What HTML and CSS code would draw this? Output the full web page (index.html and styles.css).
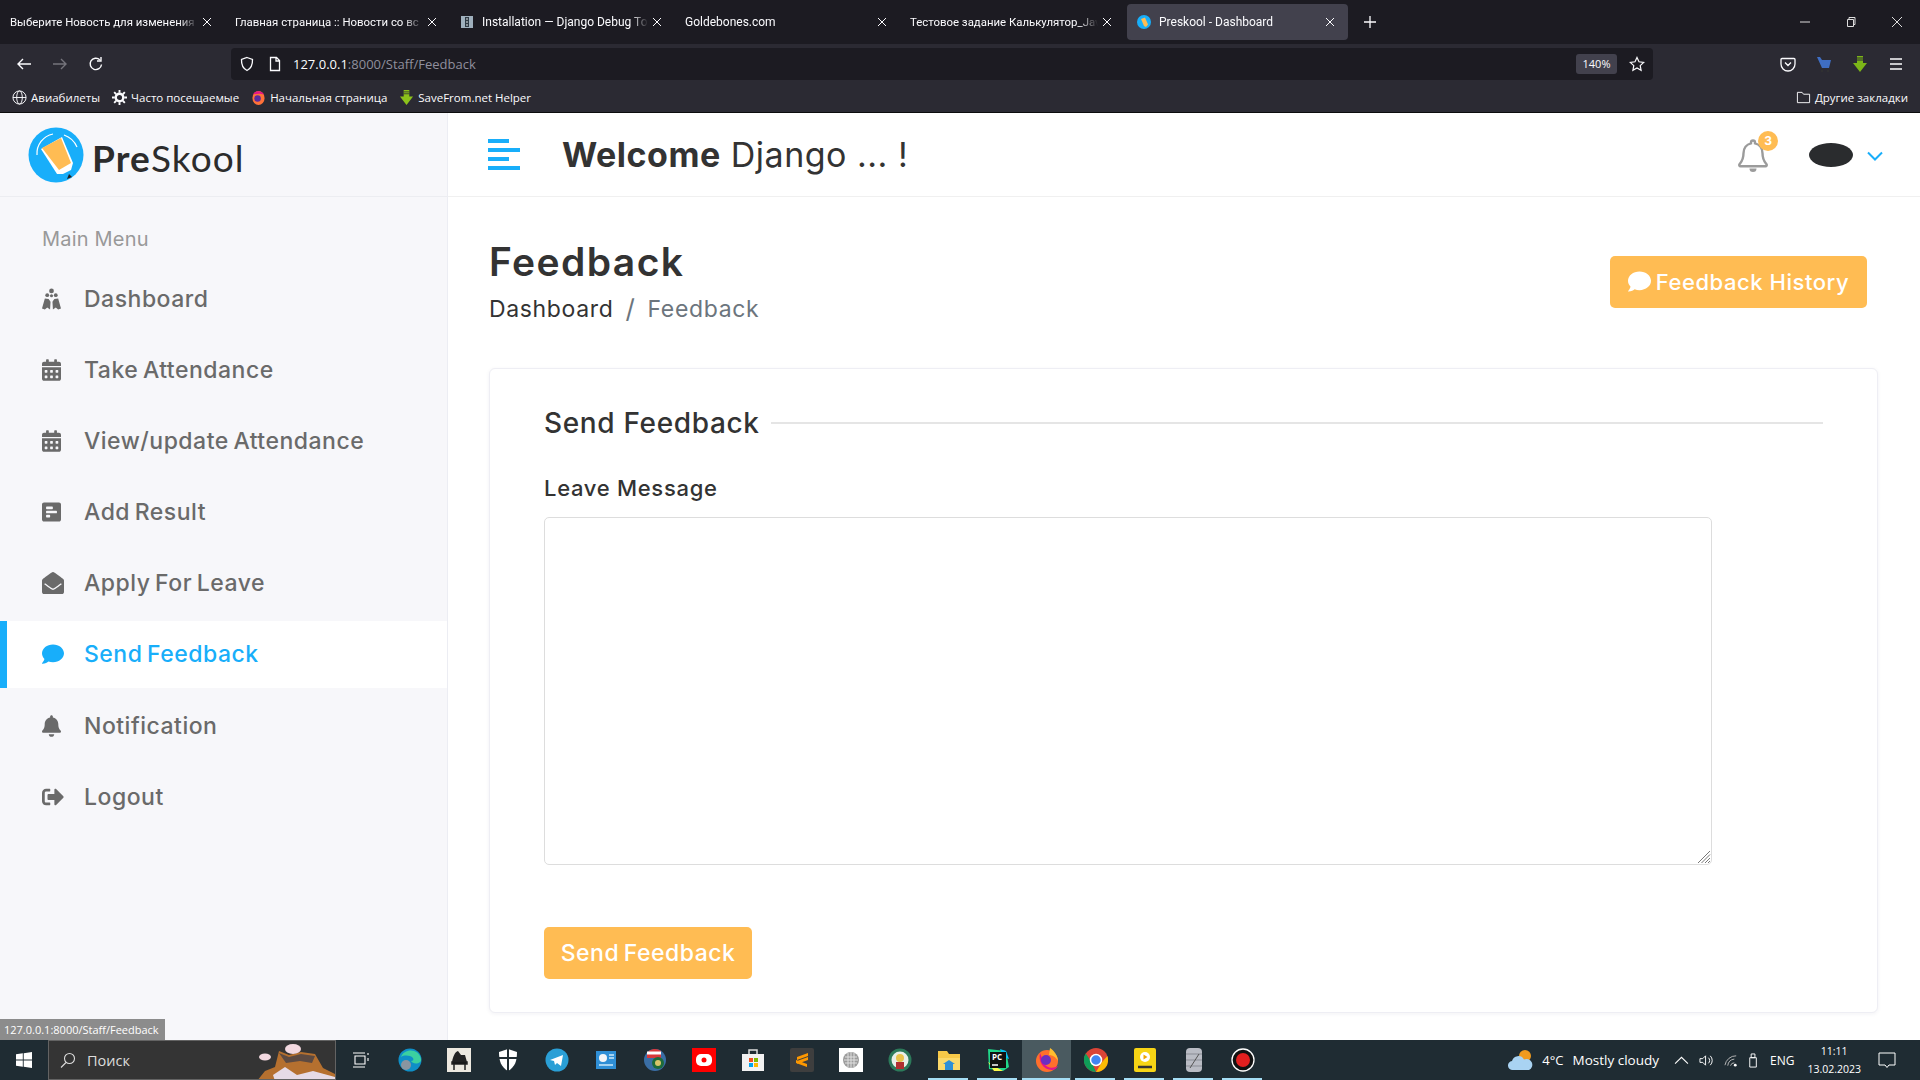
FILE: index.html
```html
<!DOCTYPE html>
<html lang="en">
<head>
  <meta charset="UTF-8">
  <title>Preskool - Dashboard</title>
  <link rel="stylesheet" href="styles.css">
</head>
<body>
  <svg class="sprite" width="0" height="0">
    <symbol id="i-calendar" viewBox="0 0 448 512"><path d="M0 464c0 26.5 21.5 48 48 48h352c26.5 0 48-21.5 48-48V192H0v272zm320-196c0-6.6 5.4-12 12-12h40c6.6 0 12 5.4 12 12v40c0 6.6-5.4 12-12 12h-40c-6.6 0-12-5.4-12-12v-40zm0 128c0-6.6 5.4-12 12-12h40c6.6 0 12 5.4 12 12v40c0 6.6-5.4 12-12 12h-40c-6.6 0-12-5.4-12-12v-40zM192 268c0-6.6 5.4-12 12-12h40c6.6 0 12 5.4 12 12v40c0 6.6-5.4 12-12 12h-40c-6.6 0-12-5.4-12-12v-40zm0 128c0-6.6 5.4-12 12-12h40c6.6 0 12 5.4 12 12v40c0 6.6-5.4 12-12 12h-40c-6.6 0-12-5.4-12-12v-40zM64 268c0-6.6 5.4-12 12-12h40c6.6 0 12 5.4 12 12v40c0 6.6-5.4 12-12 12H76c-6.6 0-12-5.4-12-12v-40zm0 128c0-6.6 5.4-12 12-12h40c6.6 0 12 5.4 12 12v40c0 6.6-5.4 12-12 12H76c-6.6 0-12-5.4-12-12v-40zM400 64h-48V16c0-8.8-7.2-16-16-16h-32c-8.8 0-16 7.2-16 16v48H160V16c0-8.8-7.2-16-16-16h-32c-8.8 0-16 7.2-16 16v48H48C21.5 64 0 85.5 0 112v48h448v-48c0-26.5-21.5-48-48-48z"/></symbol>
    <symbol id="i-comment" viewBox="0 0 512 512"><path d="M256 32C114.6 32 0 125.1 0 240c0 49.6 21.4 95 57 130.7C44.5 421.1 2.7 466 2.2 466.5c-2.2 2.3-2.8 5.7-1.5 8.7S4.8 480 8 480c66.3 0 116-31.8 140.6-51.4 32.7 12.3 69 19.4 107.4 19.4 141.4 0 256-93.1 256-208S397.4 32 256 32z"/></symbol>
    <symbol id="i-close" viewBox="0 0 10 10"><path d="M1 1l8 8M9 1l-8 8" fill="none" stroke="currentColor" stroke-width="1"/></symbol>
  </svg>

  <div class="tabstrip">
    <div class="tab"><span class="tab-title tab-title-ru">Выберите Новость для изменения</span><svg class="tab-x"><use href="#i-close"/></svg></div>
    <div class="tab"><span class="tab-title tab-title-ru">Главная страница :: Новости со вс</span><svg class="tab-x"><use href="#i-close"/></svg></div>
    <div class="tab">
      <svg class="tab-icon" viewBox="0 0 14 14"><rect x="1" y="1" width="12" height="12" fill="#9fb0bd"/><rect x="5" y="2" width="4" height="10" fill="#2e3a44"/><path d="M6 4h2M6 7h2M6 10h2" stroke="#dfe6ea"/></svg>
      <span class="tab-title">Installation — Django Debug To</span><svg class="tab-x"><use href="#i-close"/></svg>
    </div>
    <div class="tab"><span class="tab-title">Goldebones.com</span><svg class="tab-x"><use href="#i-close"/></svg></div>
    <div class="tab"><span class="tab-title tab-title-ru">Тестовое задание Калькулятор_Jav</span><svg class="tab-x"><use href="#i-close"/></svg></div>
    <div class="tab tab-active">
      <svg class="tab-icon" viewBox="0 0 14 14"><circle cx="7" cy="7" r="7" fill="#18aefa"/><path d="M4 4l4-1.600 3 7-2 2.600-2-1z" fill="#ffbc53"/></svg>
      <span class="tab-title">Preskool - Dashboard</span><svg class="tab-x"><use href="#i-close"/></svg>
    </div>
    <svg class="tab-new" viewBox="0 0 12 12"><path d="M6 0v12M0 6h12" stroke="#fbfbfe" stroke-width="1.3"/></svg>
    <div class="window-btns">
      <svg viewBox="0 0 10 10"><path d="M0 5h10" stroke="#ddd"/></svg>
      <svg viewBox="0 0 10 10"><path d="M1.500 2.500h6v7h-6zM3 2.500V.5h6v7H7.500" fill="none" stroke="#ddd"/></svg>
      <svg viewBox="0 0 10 10"><path d="M0 0l10 10M10 0L0 10" stroke="#ddd"/></svg>
    </div>
  </div>

  <div class="toolbar">
    <svg class="tool-icon tool-first" viewBox="0 0 16 16"><path d="M15 8H2M7 3L2 8l5 5" fill="none" stroke="#fbfbfe" stroke-width="1.4"/></svg>
    <svg class="tool-icon" viewBox="0 0 16 16"><path d="M1 8h13M9 3l5 5-5 5" fill="none" stroke="#75747c" stroke-width="1.4"/></svg>
    <svg class="tool-icon" viewBox="0 0 16 16"><path d="M13.500 8.500A5.700 5.700 0 1 1 11.800 3.800M13 1v4H9" fill="none" stroke="#fbfbfe" stroke-width="1.4"/></svg>
    <div class="urlbar">
      <svg class="url-icon" viewBox="0 0 16 16"><path d="M8 1.500l5.500 2c.2 5-1.500 9-5.500 11-4-2-5.700-6-5.500-11z" fill="none" stroke="#fbfbfe" stroke-width="1.3"/></svg>
      <svg class="url-icon" viewBox="0 0 16 16"><path d="M3.500 1.500h6l3 3v10h-9zM9 1.500v3.500h3.500" fill="none" stroke="#fbfbfe" stroke-width="1.3"/></svg>
      <span class="url-text">127.0.0.1<span class="url-dim">:8000/Staff/Feedback</span></span>
      <span class="zoom-chip">140%</span>
      <svg class="url-icon" viewBox="0 0 16 16"><path d="M8 1.500l2 4.300 4.700.6-3.500 3.200.9 4.700L8 12l-4.100 2.300.9-4.700-3.500-3.200 4.700-.6z" fill="none" stroke="#fbfbfe" stroke-width="1.2"/></svg>
    </div>
    <div class="tool-right">
      <svg viewBox="0 0 16 16"><path d="M2 2.500h12a1 1 0 0 1 1 1V8a7 7 0 0 1-14 0V3.500a1 1 0 0 1 1-1zM5 6.500l3 3 3-3" fill="none" stroke="#fbfbfe" stroke-width="1.3"/></svg>
      <svg viewBox="0 0 16 16"><path d="M1 1h3l2 3h9l-2 8H6z" fill="#3f6ec4"/><circle cx="6" cy="15" r="1" fill="#333"/><circle cx="12" cy="15" r="1" fill="#333"/></svg>
      <svg viewBox="0 0 16 16"><path d="M5 0h6v7h4l-7 9-7-9h4z" fill="#7cb518"/><path d="M5 2h6M5 4h6" stroke="#2b2a33"/></svg>
      <svg viewBox="0 0 16 16"><path d="M2 3h12M2 8h12M2 13h12" stroke="#fbfbfe" stroke-width="1.4"/></svg>
    </div>
  </div>

  <div class="bookmarks">
    <span class="bm">
      <svg viewBox="0 0 16 16"><circle cx="8" cy="8" r="7" fill="none" stroke="#fbfbfe"/><ellipse cx="8" cy="8" rx="3" ry="7" fill="none" stroke="#fbfbfe"/><path d="M1 8h14" stroke="#fbfbfe"/></svg>Авиабилеты
    </span>
    <span class="bm">
      <svg viewBox="0 0 16 16"><circle cx="8" cy="8" r="4" fill="none" stroke="#fbfbfe" stroke-width="2.5"/><path d="M8 0v3M8 13v3M0 8h3M13 8h3M2.300 2.300l2.200 2.200M11.500 11.500l2.200 2.200M13.700 2.300l-2.200 2.200M4.500 11.500l-2.200 2.200" stroke="#fbfbfe" stroke-width="2"/></svg>Часто посещаемые
    </span>
    <span class="bm">
      <svg viewBox="0 0 16 16"><ellipse cx="8" cy="8.500" rx="6.500" ry="7.500" fill="#ff7139"/><circle cx="7" cy="9" r="3.500" fill="#5b2a9e"/><path d="M2 5c2-5 10-5 12 0-3-1.500-8-1.500-12 0z" fill="#e31587"/></svg>Начальная страница
    </span>
    <span class="bm">
      <svg viewBox="0 0 16 16"><path d="M5 0h6v7h4l-7 9-7-9h4z" fill="#8cc21b"/><path d="M5 2h6M5 4h6" stroke="#2b2a33" stroke-width=".8"/></svg>SaveFrom.net Helper
    </span>
    <span class="bm bm-right">
      <svg viewBox="0 0 16 16"><path d="M1.500 13.500v-11h5l1.500 2h6.500v9z" fill="none" stroke="#fbfbfe"/></svg>Другие закладки
    </span>
  </div>

  <div class="page">
    <aside class="sidebar">
      <div class="brand">
        <svg class="brand-logo" viewBox="0 0 56 56">
          <circle cx="28" cy="28" r="27.5" fill="#18aefa"/>
          <path d="M9 28a20 20 0 0 1 16-21" fill="none" stroke="#fff" stroke-width="1.2"/>
          <path d="M36 8A22 22 0 0 1 49 20" fill="none" stroke="#fff" stroke-width="1.2"/>
          <path d="M13 22L34 10l11 26-2 7-8 4-6 0z" fill="#fff"/>
          <path d="M14 21L33 11l10 25-12 7z" fill="#ffbc53"/>
          <path d="M39 52l2-5 3 3z" fill="#222"/>
        </svg>
        <span class="brand-name"><b>Pre</b>Skool</span>
      </div>
      <div class="menu-title">Main Menu</div>
      <nav class="menu">
        <a class="menu-link">
          <svg class="menu-icon" viewBox="0 0 20 22"><circle cx="10" cy="2.500" r="2.500"/><circle cx="5.500" cy="7" r="2"/><circle cx="14.500" cy="7" r="2"/><circle cx="10" cy="7.500" r="1.600"/><path d="M3 10.500l4 .5 2 3-.5 8-3-2-2.500 2-3-1zM17 10.500l-4 .5-2 3 .5 8 3-2 2.500 2 3-1z"/></svg>
          Dashboard
        </a>
        <a class="menu-link"><svg class="menu-icon"><use href="#i-calendar"/></svg>Take Attendance</a>
        <a class="menu-link"><svg class="menu-icon"><use href="#i-calendar"/></svg>View/update Attendance</a>
        <a class="menu-link">
          <svg class="menu-icon" viewBox="0 0 448 512"><path d="M448 432V80c0-26.5-21.5-48-48-48H48C21.5 32 0 53.5 0 80v352c0 26.5 21.5 48 48 48h352c26.5 0 48-21.5 48-48zM112 192c-8.840 0-16-7.160-16-16v-32c0-8.840 7.160-16 16-16h128c8.840 0 16 7.160 16 16v32c0 8.840-7.160 16-16 16H112zm0 96c-8.840 0-16-7.160-16-16v-32c0-8.840 7.160-16 16-16h224c8.840 0 16 7.160 16 16v32c0 8.840-7.160 16-16 16H112zm0 96c-8.840 0-16-7.160-16-16v-32c0-8.840 7.160-16 16-16h64c8.840 0 16 7.160 16 16v32c0 8.840-7.160 16-16 16h-64z"/></svg>
          Add Result
        </a>
        <a class="menu-link">
          <svg class="menu-icon menu-icon-wide" viewBox="0 0 512 512"><path d="M512 464c0 26.510-21.490 48-48 48H48c-26.510 0-48-21.490-48-48V200.724a48 48 0 0 1 18.387-37.776c24.913-19.529 45.501-35.365 164.200-121.511C199.412 29.170 232.797-.347 256 .003c23.198-.354 56.596 29.172 73.413 41.433 118.687 86.137 139.303 101.995 164.200 121.512A48 48 0 0 1 512 200.724V464zm-65.666-196.605c-2.563-3.728-7.700-4.595-11.339-1.907-22.845 16.873-55.462 40.705-105.582 77.079-16.825 12.266-50.210 41.781-73.413 41.430-23.211.344-56.559-29.143-73.413-41.430-50.114-36.370-82.734-60.204-105.582-77.079-3.639-2.688-8.776-1.821-11.339 1.907l-9.072 13.196a7.998 7.998 0 0 0 1.839 10.967c22.887 16.899 55.454 40.690 105.303 76.868 20.274 14.781 56.524 47.813 92.264 47.573 35.724.242 71.961-32.771 92.263-47.573 49.850-36.179 82.418-59.970 105.303-76.868a7.998 7.998 0 0 0 1.839-10.967l-9.071-13.196z"/></svg>
          Apply For Leave
        </a>
        <a class="menu-link active"><svg class="menu-icon menu-icon-wide"><use href="#i-comment"/></svg>Send Feedback</a>
        <a class="menu-link">
          <svg class="menu-icon" viewBox="0 0 448 512"><path d="M224 512c35.320 0 63.970-28.650 63.970-64H160.030c0 35.350 28.650 64 63.970 64zm215.390-149.710c-19.320-20.760-55.470-51.990-55.470-154.290 0-77.700-54.480-139.900-127.940-155.160V32c0-17.670-14.320-32-31.980-32s-31.980 14.330-31.980 32v20.840C118.560 68.100 64.080 130.300 64.080 208c0 102.300-36.150 133.530-55.470 154.290-6 6.450-8.660 14.160-8.610 21.710.11 16.400 12.980 32 32.100 32h383.800c19.120 0 32-15.600 32.100-32 .05-7.550-2.610-15.270-8.610-21.710z"/></svg>
          Notification
        </a>
        <a class="menu-link">
          <svg class="menu-icon menu-icon-wide" viewBox="0 0 512 512"><path d="M497 273L329 441c-15 15-41 4.500-41-17v-96H152c-13.300 0-24-10.700-24-24v-96c0-13.300 10.700-24 24-24h136V88c0-21.400 25.900-32 41-17l168 168c9.300 9.400 9.300 24.600 0 34zM192 436v-40c0-6.600-5.400-12-12-12H96c-17.700 0-32-14.300-32-32V160c0-17.700 14.300-32 32-32h84c6.600 0 12-5.400 12-12V76c0-6.600-5.400-12-12-12H96c-53 0-96 43-96 96v192c0 53 43 96 96 96h84c6.600 0 12-5.400 12-12z"/></svg>
          Logout
        </a>
      </nav>
    </aside>

    <main class="main">
      <header class="topbar">
        <div class="burger"><i></i><i></i><i></i><i></i></div>
        <div class="welcome"><b>Welcome</b> Django ... !</div>
        <div class="bell">
          <svg viewBox="0 0 30 34"><path d="M15 2.500a2 2 0 0 1 2 2v.8c4.500 1 7.500 5 7.500 10 0 6.500 2 8.500 4 11 .6.800 0 2-1 2H2.500c-1 0-1.600-1.200-1-2 2-2.500 4-4.500 4-11 0-5 3-9 7.500-10v-.8a2 2 0 0 1 2-2z" fill="none" stroke="#9b9b9b" stroke-width="2.4"/><path d="M11.500 30.500h7a3.500 3.500 0 0 1-7 0z" fill="#9b9b9b"/></svg>
          <span class="bell-count">3</span>
        </div>
        <div class="avatar"></div>
        <svg class="chevron" viewBox="0 0 16 10"><path d="M1 1.500l7 7 7-7" fill="none" stroke="#18aefa" stroke-width="2"/></svg>
      </header>

      <div class="content">
        <div class="page-head">
          <div>
            <h3 class="page-title">Feedback</h3>
            <div class="crumbs"><span>Dashboard</span><span class="crumb-sep">/</span><span class="crumb-now">Feedback</span></div>
          </div>
          <button class="btn btn-history"><svg class="btn-icon"><use href="#i-comment"/></svg>Feedback History</button>
        </div>

        <section class="card">
          <h5 class="card-title">Send Feedback</h5>
          <label class="field-label" for="message">Leave Message</label>
          <div class="field-wrap">
            <textarea class="field-input" id="message"></textarea>
            <svg class="field-grip" viewBox="0 0 14 14"><path d="M13 1L1 13M13 4.500L4.500 13M13 8L8 13M13 11l-2 2" stroke="#777" stroke-width="1"/></svg>
          </div>
          <button class="btn btn-send">Send Feedback</button>
        </section>
      </div>
    </main>
  </div>

  <div class="status-tip">127.0.0.1:8000/Staff/Feedback</div>

  <footer class="taskbar">
    <svg class="win-logo" viewBox="0 0 16 16"><path d="M0 2.300l6.800-1v6.200H0zM7.700 1.200L16 0v7.500H7.700zM0 8.400h6.800v6.300L0 13.700zM7.700 8.400H16V16l-8.300-1.200z" fill="#fff"/></svg>
    <div class="search">
      <svg viewBox="0 0 16 16"><circle cx="9.500" cy="6.500" r="5" fill="none" stroke="#ddd" stroke-width="1.1"/><path d="M6 10.500L1 15.500" stroke="#ddd" stroke-width="1.1"/></svg>
      <span>Поиск</span>
      <svg class="search-art" viewBox="0 0 82 40"><path d="M4 40l8-10 10-4 4-16 10 4 12-3 14 2 8 14 12 6v7z" fill="#b5702f"/><path d="M26 12l10 4 12-3 14 2-3 7-12-2-14 2z" fill="#5c4a42"/><path d="M20 34l12-8 12 8 16-4 22 6v4H22z" fill="#e6dbe6"/><ellipse cx="40" cy="8" rx="8" ry="5" fill="#f3d9e0"/><ellipse cx="12" cy="16" rx="6" ry="3.500" fill="#f3d9e0"/></svg>
    </div>
    <div class="apps">
      <div class="app"><svg class="app-small" viewBox="0 0 16 16"><path d="M2 4h10v8H2zM0 1h12M0 15h12M15 1v2M15 6v3" fill="none" stroke="#fff" stroke-width="1.1"/></svg></div>
      <div class="app"><svg viewBox="0 0 24 24"><circle cx="12" cy="12" r="11.500" fill="#0f8fc7"/><path d="M3 9c3-9 18-9 20 2 1 5-8 6-10 2 2 0 3-1 2-3-3-3-9-3-12-1z" fill="#3bd0a0"/><circle cx="8" cy="17" r="5" fill="#8a95a0"/></svg></div>
      <div class="app"><svg viewBox="0 0 24 24"><rect width="24" height="24" fill="#ece8df"/><path d="M5 14c1-6 3-10 6-11l3 4 4 0 2 7z" fill="#222"/><path d="M5 14h15v2H5zM7 16v6M18 16v6" stroke="#222" stroke-width="1.5"/></svg></div>
      <div class="app"><svg viewBox="0 0 24 24"><path d="M12 1l9 3c0 9-2 15-9 19C5 19 3 13 3 4z" fill="#fff"/><path d="M12 1v22M3 10h18" stroke="#222e34" stroke-width="2"/></svg></div>
      <div class="app"><svg viewBox="0 0 24 24"><circle cx="12" cy="12" r="11.500" fill="#2a9fd6"/><path d="M5 12l13-5-2 11-4-3-2 2-1-4z" fill="#fff"/></svg></div>
      <div class="app"><svg viewBox="0 0 24 24"><rect x="2" y="3" width="20" height="18" fill="#2f8fd6"/><circle cx="9" cy="10" r="4" fill="#f4f6f8"/><path d="M15 7h5M15 10h5M5 17h14" stroke="#cdeafa" stroke-width="1.5"/></svg></div>
      <div class="app"><svg viewBox="0 0 24 24"><circle cx="12" cy="12" r="11" fill="#3a6ea5"/><path d="M4 5a10 10 0 0 1 14-2v7H4z" fill="#d8383a"/><path d="M4 5h14" stroke="#fff" stroke-width="3"/><circle cx="15" cy="15" r="6" fill="#1d6b3a"/><circle cx="15" cy="15" r="3" fill="#d8c46a"/></svg></div>
      <div class="app"><svg viewBox="0 0 24 24"><rect width="24" height="24" fill="#f00"/><rect x="4" y="6" width="16" height="12" rx="5" fill="#fff"/><circle cx="12" cy="12" r="2.500" fill="#f00"/></svg></div>
      <div class="app"><svg viewBox="0 0 24 24"><path d="M8 6V2h8v4" fill="none" stroke="#ddd" stroke-width="1.5"/><rect x="1" y="6" width="22" height="17" fill="#f2f2f2"/><rect x="8" y="10" width="4" height="4" fill="#f25022"/><rect x="13" y="10" width="4" height="4" fill="#7fba00"/><rect x="8" y="15" width="4" height="4" fill="#00a4ef"/><rect x="13" y="15" width="4" height="4" fill="#ffb900"/></svg></div>
      <div class="app"><svg viewBox="0 0 24 24"><rect width="24" height="24" rx="2" fill="#3e3e3e"/><path d="M18 5L7 9v3l11-4zM18 12L7 16v-3l11-4zM6 12l11 4v3L6 15z" fill="#ff9800"/></svg></div>
      <div class="app"><svg viewBox="0 0 24 24"><rect width="24" height="24" fill="#fff"/><circle cx="12" cy="12" r="8" fill="#9c9c9c"/><path d="M6 9h12M5 12h14M6 15h12M9 5v14M12 4v16M15 5v14" stroke="#e0e0e0"/></svg></div>
      <div class="app"><svg viewBox="0 0 24 24"><circle cx="12" cy="12" r="11.500" fill="#2c7a5a"/><circle cx="12" cy="12" r="8.500" fill="#e8efe8"/><circle cx="12" cy="10" r="4" fill="#e8c34a"/><rect x="8" y="14" width="8" height="7" fill="#b03030"/></svg></div>
      <div class="app run"><svg viewBox="0 0 24 24"><path d="M1 3h9l2 3h11v16H1z" fill="#f7c948"/><path d="M1 10h22v12H1z" fill="#fbd96a"/><path d="M8 16h8v6H8z" fill="#2e8fd6"/><path d="M6 16l6-4 6 4z" fill="#2e8fd6"/></svg></div>
      <div class="app run"><svg viewBox="0 0 24 24"><path d="M2 1l18 2 3 16-6 4-14-2z" fill="#21d789"/><path d="M14 1l6 2 3 8-6-2z" fill="#07c3f2"/><path d="M2 14l6 9 9 0-9-5z" fill="#fcf84a"/><rect x="4" y="4" width="16" height="16" fill="#111"/><path d="M6 17h6" stroke="#fff" stroke-width="1.5"/><text x="6" y="12" class="pc-text">PC</text></svg></div>
      <div class="app run active"><svg viewBox="0 0 24 24"><circle cx="12" cy="13" r="11" fill="#ff6f2c"/><path d="M5 5c-2 8 3 17 12 17 3 0 5-2 6-4-5 3-12 2-14-3z" fill="#e31587"/><path d="M15 0c5 3 8 9 8 13-2-4-6-6-9-6z" fill="#ffbd2e"/><circle cx="11" cy="12" r="5" fill="#6a2fc0"/></svg></div>
      <div class="app run"><svg viewBox="0 0 24 24"><circle cx="12" cy="12" r="12" fill="#db4437"/><path d="M12 24l6-10 5.400-6A12 12 0 0 1 12 24z" fill="#fbbc05"/><path d="M12 24A12 12 0 0 1 1.800 5.500L8 15z" fill="#0f9d58"/><circle cx="12" cy="12" r="5.500" fill="#4285f4" stroke="#fff" stroke-width="1.5"/></svg></div>
      <div class="app run"><svg viewBox="0 0 24 24"><rect x="1" width="22" height="24" rx="2" fill="#f7d515"/><circle cx="12" cy="9" r="5" fill="#fff"/><path d="M10.500 6.500l4 2.500-4 2.500z" fill="#f0a500"/><path d="M5 19h14" stroke="#333" stroke-width="2.5"/></svg></div>
      <div class="app run"><svg viewBox="0 0 24 24"><rect x="4" width="16" height="24" rx="4" fill="#b9bcc4"/><path d="M4 6h16M4 12h16M4 18h16" stroke="#8a8d95"/><path d="M8 20L17 6" stroke="#555"/></svg></div>
      <div class="app run"><svg viewBox="0 0 24 24"><circle cx="12" cy="12" r="11" fill="#111" stroke="#fff" stroke-width="1.3"/><circle cx="12" cy="12" r="7" fill="#e21f1f"/></svg></div>
    </div>
    <div class="tray">
      <svg class="tray-weather" viewBox="0 0 26 22"><circle cx="17" cy="7" r="6" fill="#f09a1e"/><path d="M5 21a4.500 4.500 0 0 1-1-9 6.500 6.500 0 0 1 12-1.500A5 5 0 0 1 21 21z" fill="#a9d3f2"/></svg>
      <span class="tray-temp">4°C</span>
      <span class="tray-sky">Mostly cloudy</span>
      <svg class="tray-ico" viewBox="0 0 14 14"><path d="M1 10l6-6 6 6" fill="none" stroke="#fff"/></svg>
      <svg class="tray-ico" viewBox="0 0 16 16"><path d="M1 6h3l3-3v10l-3-3H1zM10 5a4 4 0 0 1 0 6M12 3a7 7 0 0 1 0 10" fill="none" stroke="#fff"/></svg>
      <svg class="tray-ico tray-wifi" viewBox="0 0 16 16"><path d="M1 13a12 12 0 0 1 12-10M4 13.500a8 8 0 0 1 7-7M7 13.500a4 4 0 0 1 4-3" fill="none" stroke="#bbb"/><circle cx="12" cy="13" r="1.500" fill="#fff"/></svg>
      <svg class="tray-ico" viewBox="0 0 16 16"><path d="M4 5h7v10H4zM5.500 1h4v4h-4z" fill="none" stroke="#fff"/></svg>
      <span class="tray-lang">ENG</span>
      <div class="clock"><span>11:11</span><span>13.02.2023</span></div>
      <svg class="tray-note" viewBox="0 0 18 18"><path d="M1 2h16v12h-6l-2 2.500L7 14H1z" fill="none" stroke="#fff"/></svg>
    </div>
  </footer>
</body>
</html>
```

FILE: styles.css
```css
* {
  margin: 0;
  padding: 0;
  box-sizing: border-box;
}
html, body {
  width: 1920px;
  height: 1080px;
  overflow: hidden;
}
body {
  font-family: Inter, 'Noto Sans', sans-serif;
  display: flex;
  flex-direction: column;
  position: relative;
  background: #fff;
}
.sprite {
  position: absolute;
}

/* browser chrome */
.tabstrip {
  height: 44px;
  flex: none;
  background: #1c1b22;
  display: flex;
  align-items: center;
  font-family: Roboto, 'Noto Sans', sans-serif;
  font-size: 12px;
  color: #fbfbfe;
}
.tab {
  width: 225px;
  height: 36px;
  display: flex;
  align-items: center;
  padding: 0 10px;
  border-radius: 4px;
}
.tab-active {
  width: 221px;
  margin-left: 2px;
  background: #42414d;
}
.tab-title {
  flex: 1;
  white-space: nowrap;
  overflow: hidden;
  -webkit-mask-image: linear-gradient(to right, #000 90%, transparent);
  mask-image: linear-gradient(to right, #000 90%, transparent);
}
.tab-title-ru {
  font-size: 11.4px;
}
.tab-icon {
  width: 14px;
  height: 14px;
  margin-right: 8px;
  flex: none;
}
.tab-x {
  width: 10px;
  height: 10px;
  margin: 0 3px 0 4px;
  flex: none;
  color: #fbfbfe;
}
.tab-new {
  width: 12px;
  height: 12px;
  margin-left: 16px;
}
.window-btns {
  margin-left: auto;
  display: flex;
  gap: 36px;
  padding-right: 18px;
}
.window-btns svg {
  width: 10px;
  height: 10px;
}

.toolbar {
  height: 36px;
  flex: none;
  padding-top: 4px;
  background: #2b2a33;
  display: flex;
  align-items: center;
}
.tool-icon {
  width: 16px;
  height: 16px;
  margin-right: 20px;
}
.tool-first {
  margin-left: 16px;
}
.urlbar {
  width: 1422px;
  height: 32px;
  margin-left: 107px;
  background: #1c1b22;
  border-radius: 4px;
  display: flex;
  align-items: center;
  padding: 0 8px;
  font-family: 'Open Sans', 'Noto Sans', sans-serif;
  font-size: 13px;
  color: #fbfbfe;
}
.url-icon {
  width: 16px;
  height: 16px;
  margin-right: 12px;
  flex: none;
}
.url-icon + .url-icon {
  margin-right: 10px;
}
.url-text {
  flex: 1;
}
.url-dim {
  color: #8f8f9d;
}
.zoom-chip {
  width: 41px;
  height: 20px;
  line-height: 20px;
  margin-right: 12px;
  text-align: center;
  background: #42414d;
  border-radius: 3px;
  font-size: 11px;
}
.urlbar > .url-icon:last-child {
  margin-right: 0;
}
.tool-right {
  margin-left: auto;
  display: flex;
  gap: 20px;
  padding-right: 16px;
}
.tool-right svg {
  width: 16px;
  height: 16px;
}

.bookmarks {
  height: 33px;
  flex: none;
  background: #2b2a33;
  border-bottom: 1px solid #0c0c0d;
  display: flex;
  align-items: center;
  padding: 2px 12px 0;
  gap: 12px;
  font-family: 'Open Sans', 'Noto Sans', sans-serif;
  font-size: 11.5px;
  color: #fbfbfe;
}
.bm {
  display: flex;
  align-items: center;
  gap: 4px;
  white-space: nowrap;
}
.bm svg {
  width: 15px;
  height: 15px;
}
.bm-right {
  margin-left: auto;
}

/* page */
.page {
  flex: 1;
  display: flex;
  min-height: 0;
}
.sidebar {
  width: 448px;
  flex: none;
  background: #f7f7fa;
  border-right: 1px solid #ecedf3;
}
.brand {
  height: 84px;
  padding-left: 28px;
  border-bottom: 1px solid #ecedf1;
  display: flex;
  align-items: center;
  gap: 8px;
}
.brand-logo {
  width: 56px;
  height: 56px;
}
.brand-name {
  font-family: Lato, sans-serif;
  font-size: 37px;
  letter-spacing: 1.1px;
  color: #2c2c2c;
  padding-top: 5px;
}
.brand-name b {
  font-weight: 700;
}
.menu-title {
  margin-top: 28px;
  height: 28px;
  line-height: 28px;
  padding-left: 42px;
  font-size: 20px;
  letter-spacing: .2px;
  color: #999;
}
.menu {
  margin-top: 12px;
  display: flex;
  flex-direction: column;
  gap: 4.2px;
}
.menu-link {
  height: 67px;
  display: flex;
  align-items: center;
  padding-left: 42px;
  font-size: 23px;
  font-weight: 500;
  letter-spacing: .5px;
  word-spacing: -2px;
  color: #6a6a6a;
}
.menu-icon {
  width: 19px;
  height: 22px;
  margin-right: 23px;
  fill: #6a6a6a;
  flex: none;
}
.menu-icon-wide {
  width: 22px;
  margin-right: 20px;
}
.menu-link.active {
  background: #fff;
  color: #18aefa;
  border-left: 7px solid #18aefa;
  padding-left: 35px;
}
.menu-link.active .menu-icon {
  fill: #18aefa;
}

.main {
  flex: 1;
  min-width: 0;
  display: flex;
  flex-direction: column;
}
.topbar {
  height: 84px;
  flex: none;
  border-bottom: 1px solid #f0f0f0;
  display: flex;
  align-items: center;
  padding-left: 40px;
}
.burger {
  width: 32px;
  height: 32px;
  display: flex;
  flex-direction: column;
  justify-content: space-between;
}
.burger i {
  display: block;
  height: 4px;
  width: 32px;
  background: #18aefa;
}
.burger i:nth-child(odd) {
  width: 21px;
}
.welcome {
  margin-left: 42px;
  font-size: 34px;
  letter-spacing: .5px;
  color: #333;
}
.welcome b {
  font-weight: 700;
}
.bell {
  margin-left: auto;
  position: relative;
  width: 30px;
  height: 34px;
}
.bell svg {
  width: 30px;
  height: 34px;
}
.bell-count {
  position: absolute;
  top: -7px;
  left: 20px;
  width: 20px;
  height: 20px;
  border-radius: 50%;
  background: #ffbc53;
  color: #fff;
  font-size: 12px;
  font-weight: 700;
  text-align: center;
  line-height: 20px;
}
.avatar {
  width: 44px;
  height: 24px;
  margin-left: 41px;
  border-radius: 50%;
  background: #2a2c2e;
}
.chevron {
  width: 16px;
  height: 10px;
  margin-left: 14px;
  margin-right: 37px;
  margin-top: 2px;
}

.content {
  flex: 1;
  padding: 0 42px 0 41px;
}
.page-head {
  display: flex;
  align-items: center;
  justify-content: space-between;
  padding: 42px 11px 0 0;
}
.page-title {
  font-size: 39px;
  line-height: 46px;
  font-weight: 600;
  letter-spacing: 1.4px;
  color: #333;
}
.crumbs {
  margin-top: 9px;
  display: flex;
  align-items: center;
  font-size: 23px;
  line-height: 30px;
  letter-spacing: .65px;
  color: #333;
}
.crumb-sep {
  margin: 0 12px;
  color: #6c757d;
  font-size: 26px;
}
.crumb-now {
  color: #6c757d;
}
.btn {
  display: flex;
  align-items: center;
  height: 52px;
  border: 0;
  border-radius: 5px;
  background: #ffbc53;
  color: #fff;
  font-family: inherit;
  font-size: 23px;
  font-weight: 500;
  letter-spacing: .5px;
  word-spacing: -2px;
}
.btn-history {
  width: 257px;
  justify-content: center;
  font-size: 22px;
  letter-spacing: .55px;
  word-spacing: 0;
}
.btn-icon {
  width: 23px;
  height: 23px;
  margin-right: 5px;
  fill: #fff;
}
.btn-send {
  width: 208px;
  justify-content: center;
  margin-top: 62px;
}

.card {
  margin-top: 44px;
  padding: 36px 54px 33px;
  background: #fff;
  border: 1px solid #eeeef4;
  border-radius: 6px;
  box-shadow: 0 1px 4px rgba(30, 30, 80, .06);
}
.card-title {
  display: flex;
  align-items: center;
  gap: 11px;
  font-size: 28px;
  line-height: 36px;
  font-weight: 500;
  letter-spacing: .65px;
  color: #333;
}
.card-title::after {
  content: "";
  flex: 1;
  height: 2px;
  background: #e5e5e5;
}
.field-label {
  display: block;
  margin-top: 32px;
  margin-bottom: 14px;
  font-size: 22px;
  line-height: 30px;
  font-weight: 500;
  letter-spacing: .7px;
  color: #333;
}
.field-wrap {
  position: relative;
  width: 1168px;
}
.field-input {
  display: block;
  width: 100%;
  height: 348px;
  border: 1px solid #ddd;
  border-radius: 5px;
  background: #fff;
  resize: none;
}
.field-grip {
  position: absolute;
  right: 1px;
  bottom: 1px;
  width: 14px;
  height: 14px;
}

.status-tip {
  position: absolute;
  left: 0;
  top: 1019px;
  width: 165px;
  height: 21px;
  line-height: 21px;
  padding-left: 4px;
  background: #8c8c8c;
  color: #fff;
  font-family: 'Open Sans', 'Noto Sans', sans-serif;
  font-size: 11px;
  white-space: nowrap;
}

/* windows taskbar */
.taskbar {
  height: 40px;
  flex: none;
  background: #1f2c33;
  display: flex;
  align-items: center;
  font-family: 'Open Sans', 'Noto Sans', sans-serif;
  color: #fff;
}
.win-logo {
  width: 16px;
  height: 16px;
  margin: 0 16px;
  flex: none;
}
.search {
  width: 288px;
  height: 40px;
  flex: none;
  background: #343434;
  border: 1px solid #636363;
  display: flex;
  align-items: center;
  padding-left: 11px;
  gap: 11px;
  font-size: 14.5px;
  color: #ddd;
  position: relative;
  overflow: hidden;
}
.search > svg:first-child {
  width: 16px;
  height: 16px;
}
.search-art {
  position: absolute;
  right: 0;
  top: 0;
  width: 82px;
  height: 40px;
}
.apps {
  display: flex;
  flex: none;
}
.app {
  width: 49px;
  height: 40px;
  display: flex;
  align-items: center;
  justify-content: center;
  position: relative;
}
.app svg {
  width: 24px;
  height: 24px;
}
.app svg.app-small {
  width: 16px;
  height: 16px;
}
.app.run::after {
  content: "";
  position: absolute;
  left: 4px;
  right: 5px;
  bottom: 0;
  height: 2px;
  background: #a5def5;
}
.app.active {
  background: #4a5a60;
}
.app.active::after {
  left: 0;
  right: 1px;
}
.pc-text {
  font-size: 8px;
  font-weight: 700;
  fill: #fff;
}
.tray {
  margin-left: auto;
  display: flex;
  align-items: center;
  font-size: 13px;
  padding-right: 24px;
}
.tray-weather {
  width: 26px;
  height: 22px;
  margin-right: 8px;
}
.tray-temp {
  margin-right: 9px;
}
.tray-sky {
  margin-right: 15px;
  font-size: 13.5px;
}
.tray-ico {
  width: 15px;
  height: 15px;
  margin-right: 10px;
}
.tray-ico.tray-wifi {
  margin-right: 7px;
}
.tray-lang {
  font-size: 12px;
  margin: 0 13px 0 -1px;
}
.clock {
  display: flex;
  flex-direction: column;
  align-items: center;
  font-size: 10.5px;
  line-height: 18px;
  margin-right: 17px;
}
.tray-note {
  width: 18px;
  height: 18px;
}
```
